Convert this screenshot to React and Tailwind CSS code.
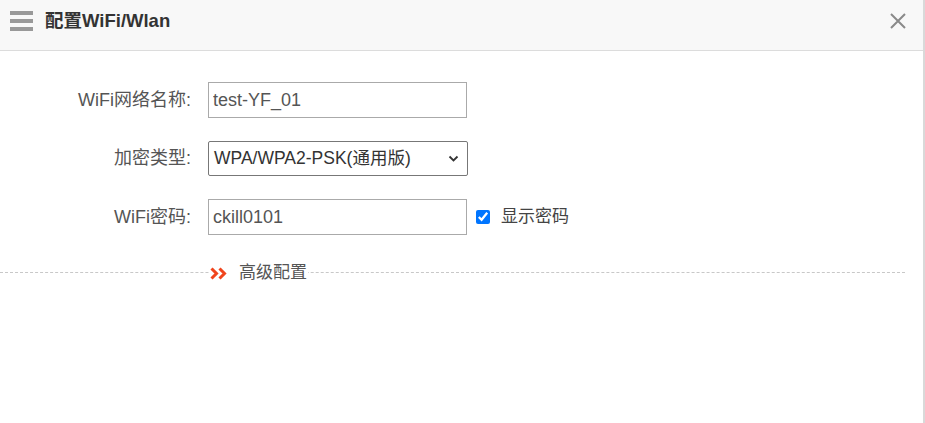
import React, { useState } from 'react';

// Form row: right-aligned label + control
const Row = ({ label, children }) => (
  <div className="flex items-center">
    <label className="w-[191px] text-right text-[18px] text-[#555]">{label}</label>
    <div className="ml-[17px] flex items-center">{children}</div>
  </div>
);

export default function App() {
  const [ssid, setSsid] = useState('test-YF_01');
  const [pwd, setPwd] = useState('ckill0101');
  const [show, setShow] = useState(true);

  return (
    <div
      className="w-[925px] h-[423px] bg-white border-r-2 border-[#d9d9d9] overflow-hidden"
      style={{ fontFamily: '"Liberation Sans", Arial, "Noto Sans CJK SC", sans-serif' }}
    >
      {/* Header */}
      <div className="h-[51px] bg-[#f8f8f8] border-b border-[#dcdcdc] flex items-start pt-[11px] pl-[10px] pr-[17px]">
        <div className="flex flex-col gap-[4px] w-[23px]">
          <span className="block h-[4px] bg-[#999]" />
          <span className="block h-[4px] bg-[#999]" />
          <span className="block h-[4px] bg-[#999]" />
        </div>
        <h1 className="ml-[12px] text-[18.5px] leading-[20px] font-bold text-[#333]">配置WiFi/Wlan</h1>
        <button className="ml-auto mt-[2px] text-[#8a8a8a]">
          <svg width="16" height="16" viewBox="0 0 16 16">
            <path d="M1 1 L15 15 M15 1 L1 15" stroke="currentColor" strokeWidth="2" />
          </svg>
        </button>
      </div>

      {/* Form */}
      <div className="pt-[31px] flex flex-col gap-[23px]">
        <Row label="WiFi网络名称:">
          <input
            value={ssid}
            onChange={(e) => setSsid(e.target.value)}
            className="w-[259px] h-[36px] border border-[#aaa] px-[4px] text-[18px] text-[#555] outline-none"
          />
        </Row>
        <Row label="加密类型:">
          <div className="relative w-[260px] h-[35px] border border-[#777] rounded-[2px] flex items-center px-[5px] text-[17.5px] text-[#333]">
            WPA/WPA2-PSK(通用版)
            <svg className="absolute right-[8px] top-[13px]" width="11" height="8" viewBox="0 0 11 8">
              <path d="M1.5 1.5 L5.5 5.5 L9.5 1.5" fill="none" stroke="#333" strokeWidth="1.8" />
            </svg>
          </div>
        </Row>
        <Row label="WiFi密码:">
          <input
            type={show ? 'text' : 'password'}
            value={pwd}
            onChange={(e) => setPwd(e.target.value)}
            className="w-[259px] h-[36px] border border-[#aaa] px-[4px] text-[18px] text-[#555] outline-none"
          />
          <label className="ml-[9px] flex items-center text-[17px] text-[#444]">
            <input
              type="checkbox"
              checked={show}
              onChange={(e) => setShow(e.target.checked)}
              className="w-[14px] h-[14px] accent-[#0075ff]"
            />
            <span className="ml-[11px]">显示密码</span>
          </label>
        </Row>
      </div>

      {/* Advanced divider */}
      <div className="mt-[37px] mr-[18px] border-t border-dashed border-[#c8c8c8] flex">
        <div className="ml-[210px] -mt-[10px] bg-white flex items-center pr-[1px] h-[20px]">
          <svg width="17" height="13" viewBox="0 0 17 13">
            <path d="M1.5 1.5 L6.5 6.5 L1.5 11.5 M9.5 1.5 L14.5 6.5 L9.5 11.5" fill="none" stroke="#f0451d" strokeWidth="3" />
          </svg>
          <span className="ml-[12px] text-[17px] leading-[20px] text-[#555]">高级配置</span>
        </div>
      </div>
    </div>
  );
}
